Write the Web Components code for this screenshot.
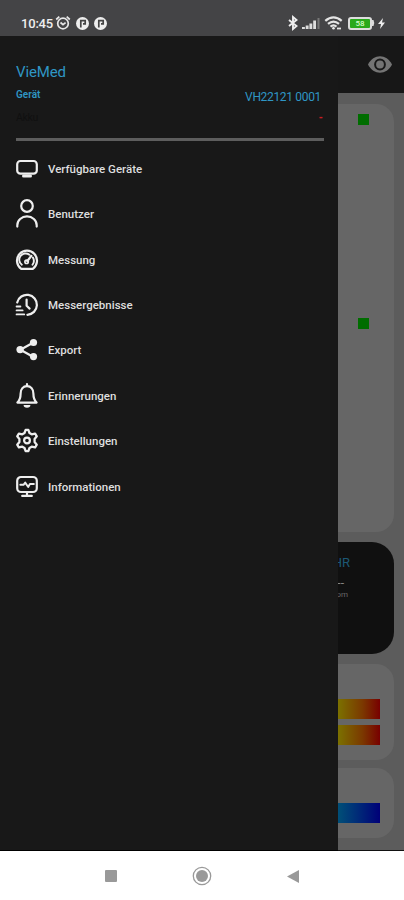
<!DOCTYPE html>
<html lang="de">
<head>
<meta charset="utf-8">
<title>VieMed</title>
<style>
html,body{margin:0;height:100%;background:#fff}
body{font-family:Roboto,"Liberation Sans",sans-serif;overflow:hidden}
</style>
</head>
<body>
<phone-screen></phone-screen>
<script>
const make=(name,html)=>customElements.define(name,class extends HTMLElement{
  constructor(){super();this.attachShadow({mode:'open'}).innerHTML=html}
});

const icons={
device:'<rect x="1.2" y="3" width="19.6" height="12.6" rx="3.2"/><path d="M7.500 17.900h7" stroke-width="3"/>',
user:'<circle cx="11" cy="3" r="5.8"/><path d="M1.3 23.600v-1.400a9.700 8.800 0 0 1 19.400 0v1.400"/>',
gauge:'<path d="M5.200 19.800a10 10 0 1 1 11.600 0z"/><path d="M5.800 15.800a6.300 6.300 0 0 1 7.600-10.100M16.900 8.600a6.500 6.500 0 0 1-.4 7.200" stroke-width="1.900"/><path d="M15.400 6.800l-4.200 5.400" stroke-width="2.200"/><circle cx="10.600" cy="12.800" r="1.700" stroke-width="1.700"/>',
history:'<path d="M1.200 8.400A10 10 0 1 1 11.400 20.800"/><path d="M10.600 5.600v6.200l3 2.800"/><path d="M.6 12.500h3.800M.6 16.400h6M.6 20.400h7.600" stroke-width="1.900"/>',
share:'<path d="M17 3.700L4.400 10.700 17 17.700"/><g fill="#eee" stroke="none"><circle cx="4.100" cy="10.600" r="3.700"/><circle cx="17.500" cy="3.500" r="3.600"/><circle cx="17.500" cy="17.600" r="3.600"/></g>',
bell:'<path d="M1.400 17.600c2.700-2.600 3.200-4.400 3.200-8.800C4.600 4 7.200 1.200 11 1.200s6.400 2.800 6.400 7.600c0 4.400.5 6.200 3.200 8.800z"/><path d="M11-1v2"/><path d="M7.600 20h6.800a3.400 2.700 0 0 1-6.800 0z" fill="#eee" stroke="none"/>',
gear:'<path transform="translate(11 10.500) scale(1.040) translate(-11 -11)" d="M8.600 3.800L9.700.8h2.600l1.100 3 2.100 1.200 3.300-.7 1.600 2.700-2.100 2.500v3l2.100 2.500-1.600 2.700-3.300-.7-2.100 1.200-1.100 3H9.700l-1.100-3L6.500 17l-3.300.7L1.600 15l2.100-2.500v-3L1.600 7l1.600-2.700 3.300.7z"/><circle cx="11" cy="10.500" r="2.900"/>',
info:'<rect x="1.200" y="1" width="19.600" height="15" rx="3.800"/><path d="M4.300 8.800h3.200l1.700-2.200 3 4.400 1.700-3h4" stroke-width="1.900"/><path d="M11 17v3M6.200 19.900h9.600"/>'
};
customElements.define('menu-row',class extends HTMLElement{
  constructor(){
    super();
    this.attachShadow({mode:'open'}).innerHTML=`<style>
    :host{display:flex;align-items:center;height:45.4px;gap:10px;color:#dedede;font-size:11.5px;font-weight:500;white-space:nowrap}
    svg{width:22px;height:22px;overflow:visible;fill:none;stroke:#eee;stroke-width:2.2;stroke-linejoin:round;stroke-linecap:round;flex:none}
    </style><svg viewBox="0 0 22 22">${icons[this.getAttribute('icon')]}</svg><slot></slot>`;
  }
});

make('status-bar',`<style>
:host{display:flex;box-sizing:border-box;height:36px;padding:10px 19px 0 21px;align-items:center;background:#444446;color:#eee;font-size:13px;font-weight:500;justify-content:space-between}
div{display:flex;align-items:center}svg{display:block;overflow:visible}
.time{width:33px;letter-spacing:-.2px}
.battery{display:flex;align-items:center;justify-content:center;box-sizing:border-box;width:24px;height:13px;border:2px solid #ddd;border-radius:3px;background:#29a91b;color:#d4ffcb;font-size:8px;line-height:9px}
</style>
<div><span class="time">10:45</span>
<svg width="16" height="14" viewBox="0 0 16 14" fill="none" stroke="#e8e8e8" stroke-width="1.700" style="margin-left:1px"><circle cx="8" cy="7.500" r="5.300"/><path d="M1.200 3.500L4.300.700M14.800 3.500L11.700.700M5.500 6.500L8 8.600l2.600-2"/></svg>
<svg width="13" height="13" viewBox="0 0 13 13" style="margin-left:4.500px"><circle cx="6.500" cy="6.500" r="6.500" fill="#eee"/><path d="M4.800 10.500V3.600h4.400v3.200H7" fill="none" stroke="#444" stroke-width="1.700"/></svg>
<svg width="13" height="13" viewBox="0 0 13 13" style="margin-left:5.500px"><circle cx="6.500" cy="6.500" r="6.500" fill="#eee"/><path d="M4.800 10.500V3.600h4.400v3.200H7" fill="none" stroke="#444" stroke-width="1.700"/></svg></div>
<div><svg width="10" height="14" viewBox="0 0 10 14" fill="none" stroke="#eee" stroke-width="1.900"><path d="M1 4l7.500 6L5 13V1l3.500 3L1 10"/></svg>
<svg width="18" height="12" viewBox="0 0 18 12" style="margin-left:4px"><path d="M0 12v-2h2.900v2zM3.700 12V8.500h2.900V12zM7.400 12V6.500h2.900V12zM11.200 12V3.500H14V12z" fill="#ddd"/><path d="M15.500 12V1h2v11z" fill="#777"/></svg>
<svg width="17" height="14" viewBox="0 0 17 14" fill="none" stroke="#e4e4e4" stroke-width="2.200" style="margin-left:5px"><path d="M.3 4.900Q8.500-2 16.700 4.900M3 7.900q5.500-4.600 11 0M5.500 10.700q3-2.500 6 0"/><circle cx="8.500" cy="12.300" r="1.300" fill="#eee" stroke="none"/><path d="M12 12.500h4" stroke-width="1.800"/></svg>
<span class="battery" style="margin-left:6px">58</span>
<svg width="3" height="6" viewBox="0 0 3 6"><path d="M0 0h1.500Q3 3 1.500 6H0z" fill="#ddd"/></svg>
<svg width="7" height="11" viewBox="0 0 7 11" style="margin-left:3px"><path d="M5 0L0 6h3L2 11l5-6.500H4z" fill="#eee"/></svg></div>`);

make('info-card',`<style>
:host{display:flex;flex-direction:column;box-sizing:border-box;background:#666;border-radius:18px;align-items:flex-end}
</style><slot></slot>`);

make('measure-view',`<style>
:host{display:flex;flex-direction:column;height:814px;background:#5c5c5c;border-bottom:1px solid #111}
header{height:57px;flex:none;background:#171717;display:flex;align-items:center;justify-content:flex-end;box-sizing:border-box;padding-right:12px}
main{display:flex;flex-direction:column;padding:11px 10px 0}
.trace{height:428px;padding:10.400px 25px 0;justify-content:flex-start;gap:193px}
.trace i{width:11px;height:11px;background:#006d00}
.vital{height:112px;margin-top:10px;background:#101010;padding:13px 44px 0;color:#1c5875;border-radius:22px}
.vital b{font-weight:400;font-size:13px;line-height:15px}
.vital span{color:#858585;font-size:12px;line-height:14px;margin-top:6px;padding-right:6px}
.vital small{color:#686868;font-size:8px;line-height:9px;margin-top:0;padding-right:2px}
.scale{height:96px;margin-top:10px;padding:34.5px 14px 0;gap:6px}
.scale i{width:354px;height:20px;background:linear-gradient(90deg,#00720c 0,#7b7200 88%,#7b3900 95%,#780000)}
.cold{height:70px;margin-top:8px;padding:35px 14px 0}
.cold i{width:354px;height:20px;background:linear-gradient(90deg,#007068 0,#005077 88%,#003078 93%,#000078)}
</style>
<header><svg width="24" height="17" viewBox="0 0 24 17"><path d="M0 8.500C5.500-2.500 18.500-2.500 24 8.500 18.500 19.500 5.500 19.500 0 8.500z" fill="#747474"/><circle cx="12" cy="8.500" r="4.900" fill="none" stroke="#191919" stroke-width="2"/></svg></header>
<main><info-card class="trace"><i></i><i></i></info-card>
<info-card class="vital"><b>HR</b><span>--</span><small>bpm</small></info-card>
<info-card class="scale"><i></i><i></i></info-card>
<info-card class="cold"><i></i></info-card></main>`);

make('nav-drawer',`<style>
:host{position:absolute;left:0;top:0;width:338px;height:815px;box-sizing:border-box;padding:27px 15px 0 16px;background:#181818;border-bottom:1px solid #000}
h1{margin:0;font-size:15px;line-height:19px;height:18px;font-weight:400;letter-spacing:-.15px;color:#2f96c4}
.line{display:flex;justify-content:space-between;color:#2f96c4;height:21px;padding-right:2px}
.line b{font-size:10px;line-height:28px;font-weight:600;letter-spacing:0}
.line span{font-size:12px;line-height:32px;letter-spacing:-.33px}
.line.dim{height:38px;box-sizing:border-box;color:#101010;padding-right:0}
.line.dim span{font-size:10.5px;line-height:31px}
.dim i{color:#c81d22;font-style:normal;font-weight:900;font-size:10px;line-height:32px}
hr{border:0;height:3px;margin:-2px -1px 0 0;background:#5d5d5d}
nav{padding-top:5.2px}
</style>
<h1>VieMed</h1>
<div class="line"><b>Gerät</b><span>VH22121 0001</span></div>
<div class="line dim"><span>Akku</span><i>-</i></div>
<hr>
<nav><slot></slot></nav>`);

make('soft-keys',`<style>
:host{display:flex;align-items:center;justify-content:space-between;box-sizing:border-box;height:49px;padding:1px 105px 0;background:#fff}
svg{display:block}
</style>
<svg width="12" height="12"><rect width="12" height="12" rx="1" fill="#999"/></svg>
<svg width="20" height="20"><circle cx="10" cy="10" r="8.700" fill="none" stroke="#999" stroke-width="1.300"/><circle cx="10" cy="10" r="6" fill="#999"/></svg>
<svg width="12" height="13"><path d="M12 0v13L0 6.500z" fill="#999"/></svg>`);

make('phone-screen',`<style>
:host{display:flex;flex-direction:column;width:404px;height:900px;background:#fff;overflow:hidden}
section{position:relative;height:815px;flex:none}
</style>
<status-bar></status-bar>
<section><measure-view></measure-view>
<nav-drawer>
<menu-row icon="device">Verfügbare Geräte</menu-row>
<menu-row icon="user">Benutzer</menu-row>
<menu-row icon="gauge">Messung</menu-row>
<menu-row icon="history">Messergebnisse</menu-row>
<menu-row icon="share">Export</menu-row>
<menu-row icon="bell">Erinnerungen</menu-row>
<menu-row icon="gear">Einstellungen</menu-row>
<menu-row icon="info">Informationen</menu-row>
</nav-drawer></section>
<soft-keys></soft-keys>`);
</script>
</body>
</html>
